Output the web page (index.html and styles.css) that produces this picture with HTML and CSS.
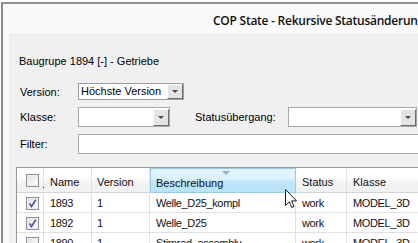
FILE: index.html
```html
<!DOCTYPE html>
<html>
<head>
<meta charset="utf-8">
<title>COP State</title>
<link rel="stylesheet" href="styles.css">
</head>
<body>
<div class="window">
  <div class="titlebar"><span class="title">COP State - Rekursive Statusänderung</span></div>
  <div class="client">
    <div class="heading">Baugrupe 1894 [-] - Getriebe</div>

    <div class="row row-version">
      <span class="lbl">Version:</span>
      <div class="combo combo-version"><span class="val">Höchste Version</span><span class="btn"><i class="tri"></i></span></div>
    </div>

    <div class="row row-klasse">
      <span class="lbl">Klasse:</span>
      <div class="combo combo-klasse"><span class="val"></span><span class="btn"><i class="tri"></i></span></div>
      <span class="lbl lbl-status">Statusübergang:</span>
      <div class="combo combo-status"><span class="val"></span><span class="btn"><i class="tri"></i></span></div>
    </div>

    <div class="row row-filter">
      <span class="lbl">Filter:</span>
      <div class="input"></div>
    </div>

    <div class="table">
      <div class="tr thead">
        <div class="th th-check"><span class="cb"></span><span class="dot">.</span></div>
        <div class="th"><span class="htext">Name</span></div>
        <div class="th"><span class="htext">Version</span></div>
        <div class="th th-sorted"><i class="sort"></i><span class="htext">Beschreibung</span></div>
        <div class="th"><span class="htext">Status</span></div>
        <div class="th"><span class="htext">Klasse</span></div>
      </div>
      <div class="tr">
        <div class="td td-check"><span class="cb checked"><svg viewBox="0 0 11 11" width="11" height="11"><path d="M2.5 5.5 L4.5 8.5 L8.8 1.8" fill="none" stroke="#4358a6" stroke-width="1.6"/></svg></span></div>
        <div class="td">1893</div>
        <div class="td">1</div>
        <div class="td">Welle_D25_kompl</div>
        <div class="td">work</div>
        <div class="td">MODEL_3D</div>
      </div>
      <div class="tr">
        <div class="td td-check"><span class="cb checked"><svg viewBox="0 0 11 11" width="11" height="11"><path d="M2.5 5.5 L4.5 8.5 L8.8 1.8" fill="none" stroke="#4358a6" stroke-width="1.6"/></svg></span></div>
        <div class="td">1892</div>
        <div class="td">1</div>
        <div class="td">Welle_D25</div>
        <div class="td">work</div>
        <div class="td">MODEL_3D</div>
      </div>
      <div class="tr">
        <div class="td td-check"><span class="cb"></span></div>
        <div class="td">1890</div>
        <div class="td">1</div>
        <div class="td">Stirnrad_assembly</div>
        <div class="td">work</div>
        <div class="td">MODEL_3D</div>
      </div>
    </div>
  </div>
</div>
<svg class="cursor" width="13" height="20" viewBox="0 0 13 20"><path d="M0.5 0.5 L0.5 16.5 L4.3 12.8 L6.8 18.5 L9 17.5 L6.6 11.9 L11.5 11.9 Z" fill="#fff" stroke="#1a1a1a" stroke-width="1" stroke-linejoin="miter"/></svg>
</body>
</html>
```
FILE: styles.css
```css
html, body {
  margin: 0;
  padding: 0;
  background: #ffffff;
  overflow: hidden;
  width: 418px;
  height: 243px;
}

body {
  font-family: "Liberation Sans", Arial, sans-serif;
  font-size: 11px;
  color: #000;
  position: relative;
}

.window {
  margin: 2px 0 0 1px;
  width: 560px;
  height: 260px;
  border-top: 2px solid #8f8f8f;
  border-left: 2px solid #8f8f8f;
  background: #fafafa;
}

.titlebar {
  height: 29px;
  display: flex;
  align-items: center;
  padding-left: 210px;
  font-family: "Open Sans", "Noto Sans", sans-serif;
  font-size: 12px;
  font-weight: 600;
  color: #111;
  white-space: nowrap;
  letter-spacing: -0.25px;
}

.title {
  padding-top: 3px;
}

.client {
  margin-left: 6px;
  height: 240px;
  background: #f0f0f0;
  padding: 0 0 0 7px;
}

.heading {
  padding-top: 22px;
  padding-left: 3px;
  height: 13px;
  line-height: 13px;
}

.row {
  display: flex;
  align-items: center;
  padding-left: 4px;
}

.row-version {
  margin-top: 15px;
  height: 17px;
}

.row-klasse {
  margin-top: 7px;
  height: 20px;
}

.row-filter {
  margin-top: 7px;
  height: 20px;
}

.lbl {
  width: 58px;
  flex: none;
}

.lbl-status {
  margin-left: 25px;
  width: 93px;
}

.combo {
  box-sizing: border-box;
  height: 100%;
  display: flex;
  background: #fff;
  border: 1px solid #a7a7a7;
  flex: none;
}

.combo-version { width: 106px; border-color: #9d9d9d; }
.combo-klasse { width: 92px; }
.combo-status { width: 129px; }

.val {
  flex: 1;
  padding-left: 2px;
  line-height: 15px;
  white-space: nowrap;
}

.btn {
  box-sizing: border-box;
  width: 16px;
  margin: 0;
  background: #e4e4e4;
  border-top: 1px solid #fdfdfd;
  border-left: 1px solid #fdfdfd;
  border-right: 1px solid #6e6e6e;
  border-bottom: 1px solid #6e6e6e;
  display: flex;
  align-items: center;
  justify-content: center;
}

.combo-klasse .btn,
.combo-status .btn {
  margin: 1px 0 0 0;
}

.tri {
  width: 0;
  height: 0;
  border-left: 3px solid transparent;
  border-right: 3px solid transparent;
  border-top: 3px solid #4a4a4a;
}

.input {
  box-sizing: border-box;
  height: 100%;
  width: 440px;
  background: #fff;
  border-top: 1px solid #a9a9a9;
  border-bottom: 1px solid #a9a9a9;
  border-left: 1px solid #a9a9a9;
}

.table {
  margin-top: 13px;
  width: 430px;
  border-top: 1px solid #979797;
  border-left: 1px solid #979797;
  background: #fff;
  color: #111;
}

.tr {
  display: grid;
  grid-template-columns: 27px 48px 58px 146px 51px 100px;
  height: 20px;
}

.thead {
  height: 25px;
}

.th {
  box-sizing: border-box;
  display: flex;
  flex-direction: column;
  align-items: flex-start;
  justify-content: flex-end;
  padding: 0 0 3px 6px;
  background: linear-gradient(to bottom, #ffffff 0%, #ffffff 40%, #f3f3f4 60%, #f1f2f3 100%);
  border-right: 1px solid #e2e3e5;
  border-bottom: 1px solid #d5d5d5;
  white-space: nowrap;
}

.th:nth-child(3), .td:nth-child(3) { padding-left: 5px; }

.htext {
  line-height: 13px;
}

.th-check {
  flex-direction: row;
  align-items: center;
  justify-content: flex-start;
  padding: 0 0 0 9px;
}

.dot {
  margin-left: 3px;
  margin-top: 7px;
  line-height: 10px;
}

.th-sorted {
  background: linear-gradient(to bottom, #e4f5fc 0%, #d9f1fb 45%, #bfe6f9 55%, #b8e3f8 100%);
  border: 1px solid #93cbe9;
  align-items: stretch;
  padding-left: 5px;
  padding-bottom: 2px;
  justify-content: space-between;
}

.sort {
  align-self: center;
  width: 0;
  height: 0;
  margin-top: 2px;
  border-left: 4px solid transparent;
  border-right: 4px solid transparent;
  border-top: 4px solid #8fb0c8;
}

.td {
  box-sizing: border-box;
  padding-left: 6px;
  display: flex;
  align-items: center;
  border-right: 1px solid #e0e0e0;
  border-bottom: 1px solid #e0e0e0;
  white-space: nowrap;
  overflow: hidden;
  letter-spacing: -0.35px;
}

.td-check {
  padding-left: 9px;
  padding-top: 2px;
}

.cb {
  box-sizing: border-box;
  width: 13px;
  height: 13px;
  border: 1px solid #8f8f8f;
  background: linear-gradient(135deg, #dcdcdc 0%, #f4f4f4 60%, #ffffff 100%);
  box-shadow: inset 0 0 0 1px #f0f0f0;
  display: flex;
  align-items: center;
  justify-content: center;
  flex: none;
}

.cb svg { display: block; }

.cursor {
  position: absolute;
  left: 285px;
  top: 189px;
}
```
